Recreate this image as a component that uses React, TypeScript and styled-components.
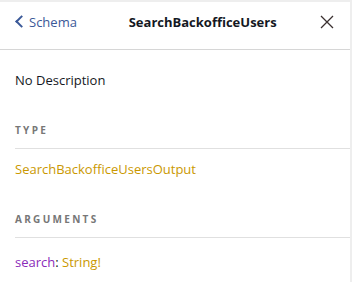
import React from 'react'
import styled, { createGlobalStyle } from 'styled-components'

const GlobalStyle = createGlobalStyle`
    html, body {
        margin: 0;
        padding: 0;
        background: #eeeeee;
    }
    body {
        font-family: "Open Sans", "Noto Sans", sans-serif;
        font-size: 13px;
        color: #141823;
    }
`

interface Arg {
    name: string
    type: string
}

const args: Arg[] = [{ name: 'search', type: 'String!' }]

const App = () => {
    return (
        <>
            <GlobalStyle />
            <Explorer>
                <TitleBar>
                    <Back>
                        <Chevron />
                        Schema
                    </Back>
                    <Title>SearchBackofficeUsers</Title>
                    <Close aria-label="close">
                        <svg width="14" height="14" viewBox="0 0 14 14">
                            <path d="M1 1 L13 13 M13 1 L1 13" stroke="#3a3030" strokeWidth="1.3" fill="none" />
                        </svg>
                    </Close>
                </TitleBar>
                <Contents>
                    <Description>No Description</Description>
                    <Category>
                        <CategoryTitle>type</CategoryTitle>
                        <TypeName>SearchBackofficeUsersOutput</TypeName>
                    </Category>
                    <Category>
                        <CategoryTitle>arguments</CategoryTitle>
                        {args.map(a => (
                            <ArgItem key={a.name}>
                                <ArgName>{a.name}</ArgName>: <TypeName>{a.type}</TypeName>
                            </ArgItem>
                        ))}
                    </Category>
                </Contents>
            </Explorer>
        </>
    )
}

export default App

const Explorer = styled.div`
    margin-top: 2px;
    width: 350px;
    height: 280px;
    background: #ffffff;
    display: flex;
    flex-direction: column;
    overflow: hidden;
`

const TitleBar = styled.div`
    display: flex;
    flex-shrink: 0;
    align-items: center;
    height: 48px;
    border-bottom: 1px solid #d6d6d6;
    box-sizing: border-box;
    padding: 0 16px 8px 14px;
`

const Back = styled.div`
    display: flex;
    align-items: center;
    color: #3b5998;
    white-space: nowrap;
    width: 120px;
`

const Chevron = styled.span`
    display: inline-block;
    width: 7px;
    height: 7px;
    border-left: 2px solid #3b5998;
    border-top: 2px solid #3b5998;
    transform: rotate(-45deg);
    margin: 0 3px 0 3px;
`

const Title = styled.div`
    flex: 1;
    text-align: center;
    font-weight: bold;
    white-space: nowrap;
`

const Close = styled.div`
    width: 60px;
    display: flex;
    justify-content: flex-end;
`

const Contents = styled.div`
    flex: 1;
    overflow: hidden;
    padding: 20px 0 0 15px;
`

const Description = styled.div`
    line-height: 20px;
`

const Category = styled.div`
    margin: 20px 0;
`

const CategoryTitle = styled.div`
    border-bottom: 1px solid #e0e0e0;
    color: #777777;
    font-size: 14px;
    font-variant: small-caps;
    font-weight: bold;
    letter-spacing: 2.3px;
    padding: 10px 0;
    line-height: 18px;
    margin-bottom: 10px;
`

const TypeName = styled.span`
    color: #ca9800;
    line-height: 20px;
`

const ArgItem = styled.div`
    line-height: 20px;
    margin-top: 14px;
`

const ArgName = styled.span`
    color: #8b2bb9;
`
